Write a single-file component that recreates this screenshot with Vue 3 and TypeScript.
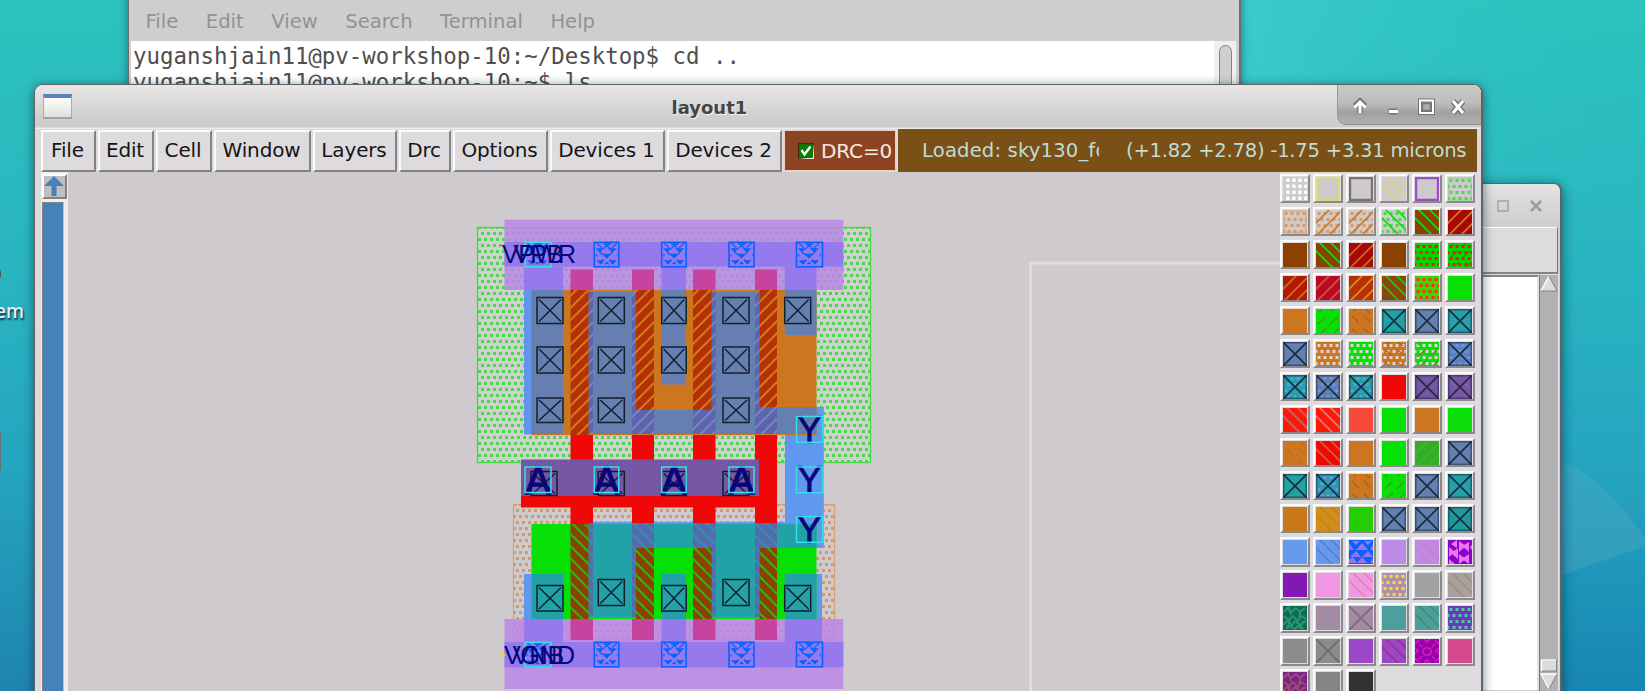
<script setup lang="ts">
type Layer = [kind: string, color: string]
interface Swatch { bg: string; layers: Layer[] }
type Box = [x: number, y: number, w: number, h: number]

const menus = [
  { label: 'File', w: 55 }, { label: 'Edit', w: 56 }, { label: 'Cell', w: 56 },
  { label: 'Window', w: 97 }, { label: 'Layers', w: 84 }, { label: 'Drc', w: 52 },
  { label: 'Options', w: 95 }, { label: 'Devices 1', w: 115 }, { label: 'Devices 2', w: 115 },
]
const termMenus = ['File', 'Edit', 'View', 'Search', 'Terminal', 'Help']

function dotPath(): string {
  let d = ''
  for (let r = 0; r < 4; r++) {
    for (let c = 0; c < 5; c++) {
      const x = c * 6 + (r % 2 ? -1.5 : 1.5)
      d += `M${x} ${r * 6 + 2}h3v3h-3z`
    }
  }
  return d
}
function gridPath(): string {
  let d = ''
  for (let r = 0; r < 4; r++) for (let c = 0; c < 4; c++) d += `M${c * 6 + 3.2} ${r * 6 + 1.5}h3.4v3.4h-3.4z`
  return d
}
const fills: Record<string, string> = {
  dots: dotPath(),
  grid: gridPath(),
  tri: 'M3 1h8l-4 4zM15 1h8l-4 4zM0 3l5 7H0zM13 3l6 7H7zM24 4v6h-3zM7 11l5 6H1zM19 11l5 6H13zM1 19l3-2 4 6H0v-4zM13 17l5 6H8zM24 18v5h-3z',
  vtri: 'M9 0v8L3 4zM1 7l6 5-6 5zM10 8v11l-7-6zM1 19l6 5H1zM11 1l7 5-7 6zM21 2v10l-7-6zM11 14l7 5-7 5zM21 14v10l-7-5zM22 7l2-2v5z',
}
const strokes: Record<string, string> = {
  slash: 'M-2 15L15 -2M-2 28L28 -2M10 28L28 10',
  back: 'M-4 4L20 28M-2 -6L30 26M9 -6L30 15',
  dslash: 'M2 15l8-7M14 15l8-7M3 3l4-4M16 2l3-3M4 25l7-6M17 25l6-6',
  dback: 'M3 7l7 7M15 7l7 7M3 -1l4 3M15 -1l6 5M3 20l6 5M15 20l6 5',
  x: 'M0 0L24 24M24 0L0 24',
  frame: 'M1 1H23V23H1z',
  rings: 'M10 9h4l2 2v3l-2 2h-4l-2-2v-3zM0 5l4-4M0 19l4 4M20 1l4 4M20 23l4-4M0 9l3 3-3 3M24 9l-3 3 3 3M9 0l3 3 3-3M9 24l3-3 3 3M4 5l3 3M17 17l3 3M20 5l-3 3M7 17l-3 3',
  weave: 'M0 6l5-4 3 4 5-4 4 4 5-4M1 10l5 4 4-4 5 5 3-5 5 3M0 19l4-4 5 4 3-4 5 4 6-4M3 23l4-3 5 3 3-3 6 3M5 0l3 9M18 4l-2 8M7 14l-3 8M20 15l-3 8',
}
const G = '#07e007', O = '#cc7720', T = '#22a1a6', S = '#647fb0', B = '#8b4100', P = '#7557a3', N = '#cecacd', R = '#f00808'
const K = '#17303f'
const sw = (bg: string, ...layers: Layer[]): Swatch => ({ bg, layers })

const swatches: Swatch[] = [
  sw(N, ['grid', '#ffffff']), sw(N, ['frame', '#e0dc70']), sw(N, ['frame', '#777477']), sw(N, ['back', '#ddd57c']), sw(N, ['frame', '#9b4fc4']), sw(N, ['frame', '#a5d3a5'], ['dots', '#4bd84b']),
  sw(N, ['frame', '#d9b899'], ['dots', '#d59b68']), sw(N, ['dots', '#d59b68'], ['slash', '#cf7a26']), sw(N, ['dots', '#d59b68'], ['slash', '#cf7a26']), sw(N, ['dots', '#4bd84b'], ['back', '#10dd10']), sw(B, ['back', '#10dd10']), sw('#a80808', ['slash', '#cf7a26']),
  sw(B), sw(B, ['back', '#10dd10']), sw('#a80808', ['slash', '#c86c20']), sw(B), sw('#00d800', ['dots', '#ff1010']), sw('#00d800', ['dots', '#ff1010'], ['dslash', '#5c6c10']),
  sw('#b01808', ['slash', '#d07010']), sw('#b80a28', ['slash', '#d85038']), sw('#b83008', ['slash', '#d89010']), sw('#8b4610', ['back', '#20cc00']), sw('#38d800', ['dots', '#ff3010']), sw(G),
  sw(O), sw(G, ['dslash', '#509010']), sw(O, ['dback', '#a55f1b']), sw(T, ['x', K]), sw(S, ['x', K]), sw(T, ['dslash', '#4a90c4'], ['x', K]),
  sw(S, ['x', K]), sw(O, ['dots', '#dad6da']), sw(G, ['dots', '#dad6da']), sw(O, ['dots', '#dad6da'], ['dback', '#a86020']), sw(G, ['dots', '#dad6da'], ['dslash', '#9a6848']), sw(S, ['dots', '#5c98f4'], ['x', K]),
  sw(T, ['dots', '#5c98f4'], ['x', K]), sw(S, ['dots', '#5c98f4'], ['x', K]), sw(T, ['dots', '#5c98f4'], ['x', K]), sw(R), sw(P, ['x', '#352548']), sw(P, ['dback', '#8666b0'], ['x', '#352548']),
  sw('#ff1808', ['back', '#b86c6c']), sw('#ff1808', ['back', '#d08080']), sw('#f84838'), sw(G), sw(O), sw(G, ['dslash', '#30c818']),
  sw(O, ['dback', '#b96d24']), sw(R, ['back', '#d06030']), sw(O), sw(G), sw('#3ba82a', ['slash', '#20c818']), sw(S, ['x', K]),
  sw(T, ['x', K]), sw(T, ['dots', '#6c92f4'], ['x', K]), sw(O, ['dback', '#a55f1b']), sw(G, ['dslash', '#509010']), sw(S, ['x', K]), sw(T, ['dslash', '#4a90b8'], ['x', K]),
  sw('#c87818'), sw('#d48e18', ['back', '#c08420']), sw('#20d000', ['slash', '#38c010']), sw(S, ['x', K]), sw('#6080b0', ['x', K]), sw('#2098a0', ['x', K]),
  sw('#6699ee'), sw('#6699ee', ['back', '#5784c4']), sw('#0a60ff', ['tri', '#9378ed']), sw('#bd8ae8'), sw('#bd8ae8', ['back', '#cf7fbc']), sw('#8c00c8', ['vtri', '#e878f0']),
  sw('#9010c4', ['rings', '#65308c']), sw('#f098e4'), sw('#f098e4', ['back', '#ee7db8']), sw('#b090a8', ['dots', '#f2e020']), sw('#a3a1a3'), sw('#a3a1a3', ['back', '#ad8c70']),
  sw('#0a7048', ['weave', '#309484']), sw('#a58aa4'), sw('#a58aa4', ['x', '#7b6c7b']), sw('#4c9f9c'), sw('#4c9f9c', ['back', '#468c74']), sw('#6a3ab8', ['dots', '#50c8a8']),
  sw('#8a8d8a'), sw('#8a8d8a', ['x', '#6a6d6a']), sw('#9b48c8'), sw('#9b48c8', ['back', '#9c3090']), sw('#9800b8', ['rings', '#d4209a']), sw('#d64a90'),
  sw('#802090', ['weave', '#965468']), sw('#858385'), sw('#303230'),
]

const strokeWidth = (k: string): number => (k === 'frame' ? 2.4 : k === 'dslash' || k === 'dback' ? 1.1 : 1.7)
const darkEdge = (s: Swatch): boolean => s.layers.some(l => l[0] === 'x' && (l[1] === K || l[1] === '#352548'))

/* layout geometry, in page units */
const polys: Box[] = [[570.5, 0, 22.5, 0], [632, 0, 22, 0], [693, 0, 22.5, 0], [755, 0, 22, 0]]
const gates: Array<[x: number, w: number, top: number, bottom: number, nTop: number]> = [
  [570.5, 18, 290, 435, 524], [636, 18, 290, 410, 548], [693, 18.7, 290, 410, 548], [759.5, 17.5, 290, 407, 548],
]
const contactCols = [537, 598.3, 661.2, 723, 784.7]
const contacts: Box[] = [
  ...contactCols.map((x): Box => [x, 297.5, 26, 26]),
  ...contactCols.slice(0, 4).map((x): Box => [x, 347, 26, 26]),
  ...[537, 598.3, 723].map((x): Box => [x, 398, 26, 24.5]),
  ...[537, 661.2, 784.7].map((x): Box => [x, 585.5, 26, 25.5]),
  ...[598.3, 723].map((x): Box => [x, 579.5, 26, 26]),
  ...[531, 598.3, 661.2, 723].map((x): Box => [x, 471.5, 26, 24]),
].map(([x, y, w, h]): Box => (x === 661.2 ? [x + 0.5, y, 24.5, h] : [x, y, w, h]))
const viaXs: Array<[number, number]> = [[525, 26], [594.3, 24.5], [661.7, 24.5], [729, 25], [796.5, 26]]
const aXs: Array<[number, number]> = viaXs.slice(0, 4)
const yYs = [416.5, 467, 516.5]
</script>

<template>
  <div class="desktop">
    <svg class="sky" viewBox="0 0 1645 691" preserveAspectRatio="none">
      <defs>
        <linearGradient id="sky" x1="0" y1="0" x2="0" y2="1">
          <stop offset="0" stop-color="#2cc3bd" /><stop offset=".35" stop-color="#2ab6c0" />
          <stop offset=".68" stop-color="#25a5c0" /><stop offset="1" stop-color="#1f84ae" />
        </linearGradient>
        <linearGradient id="glow" x1="0" y1="0" x2="1" y2="0">
          <stop offset="0" stop-color="#42d0d4" stop-opacity=".65" /><stop offset="1" stop-color="#2abfc0" stop-opacity="0" />
        </linearGradient>
        <linearGradient id="deep" x1="0" y1="0" x2="0" y2="1">
          <stop offset="0" stop-color="#1f9abc" /><stop offset="1" stop-color="#1886b0" />
        </linearGradient>
      </defs>
      <rect width="1645" height="691" fill="url(#sky)" />
      <rect x="1230" width="415" height="190" fill="url(#glow)" />
      <path d="M1550 455Q1610 480 1645 540V550L1550 580z" fill="#4caac4" opacity=".4" />
      <path d="M1550 579L1645 546V691H1550z" fill="url(#deep)" />
    </svg>
    <div class="icon-edge upper"></div>
    <div class="icon-edge lower"></div>
    <div class="icon-label">em</div>

    <section class="terminal">
      <nav class="term-menu"><span v-for="m in termMenus" :key="m">{{ m }}</span></nav>
      <div class="term-body">
        <pre>yuganshjain11@pv-workshop-10:~/Desktop$ cd ..
yuganshjain11@pv-workshop-10:~$ ls</pre>
        <div class="term-scroll"><i></i></div>
      </div>
    </section>

    <section class="console">
      <header>
        <svg width="12" height="12" viewBox="0 0 12 12"><rect x="1" y="1" width="10" height="10" fill="none" stroke="#a5a5a5" stroke-width="1.6" /></svg>
        <svg width="14" height="14" viewBox="0 0 14 14"><path d="M2 2l10 10M12 2L2 12" stroke="#9c9c9c" stroke-width="2.5" /></svg>
      </header>
      <div class="console-bar"></div>
      <div class="console-body">
        <div class="paper"></div>
        <svg class="console-scroll" width="18" height="416" viewBox="0 0 19 416" preserveAspectRatio="none">
          <rect width="19" height="416" fill="#b3b0b3" />
          <path d="M9.500 1L18 16H1z" fill="#dedbde" /><path d="M9.500 1L1 16" stroke="#fff" stroke-width="1.500" /><path d="M9.500 1L18 16H1" stroke="#858285" fill="none" />
          <rect x="1.500" y="385" width="16" height="11" fill="#dedbde" stroke="#858285" /><path d="M1.500 396V385H17" stroke="#fff" fill="none" stroke-width="1.500" />
          <path d="M1 399H18L9.500 414z" fill="#dedbde" /><path d="M9.500 414L1 399H18" stroke="#fff" fill="none" stroke-width="1.300" /><path d="M18 399L9.500 414" stroke="#858285" />
        </svg>
      </div>
    </section>

    <section class="magic">
      <header class="titlebar">
        <span class="app-icon"></span>
        <h1>layout1</h1>
        <div class="controls">
          <svg viewBox="0 0 145 40" width="145" height="40">
            <g stroke="#777" stroke-width="5" stroke-linejoin="round" fill="none">
              <path d="M22 28V17M17 21l5-5 5 5" stroke-width="6" /><path d="M50.500 26.500h9" stroke-width="6" /><path d="M115 16l10 12M125 16l-10 12" stroke-width="6" />
            </g>
            <g stroke="#fff" stroke-width="3" fill="none">
              <path d="M22 28V17" /><path d="M16.500 22.500L22 17l5.500 5.500" /><path d="M51 26.500h9" /><path d="M115 16l10 12M125 16l-10 12" />
            </g>
            <rect x="82" y="15.500" width="13" height="12.500" fill="#999" stroke="#747474" stroke-width="4" />
            <rect x="82" y="15.500" width="13" height="12.500" fill="none" stroke="#fff" stroke-width="2" />
            <rect x="84.500" y="18.500" width="8" height="7" fill="#aaa" stroke="#777" stroke-width="1.300" />
          </svg>
        </div>
      </header>

      <div class="toolbar">
        <button v-for="m in menus" :key="m.label" :style="{ width: m.w + 'px' }">{{ m.label }}</button>
        <div class="drc">
          <svg width="16" height="16" viewBox="0 0 16 16"><rect width="16" height="16" fill="#f3e8e0" /><path d="M0 16V0H16L14.500 14.500z" fill="#4b2a12" /><rect x="1.200" y="1.200" width="13.600" height="13.600" fill="#048004" /><path d="M3.500 7l3 4.500 6-8" fill="none" stroke="#fff" stroke-width="2.400" /></svg>
          <span>DRC=0</span>
        </div>
        <div class="status"><span class="loaded">Loaded: sky130_fd</span><span class="coords">(+1.82 +2.78) -1.75 +3.31 microns</span></div>
      </div>

      <div class="body">
        <div class="vscroll">
          <div class="arrow"><svg width="20" height="21" viewBox="0 0 20 21"><path d="M10 0L20 10H12.500V20H7.500V10H0z" fill="#4483b8" /></svg></div>
          <div class="track"></div>
        </div>

        <svg class="canvas" viewBox="68 172 1212 519" width="1212" height="519">
          <defs>
            <pattern id="dg" width="6" height="12" patternUnits="userSpaceOnUse" x="478" y="227"><path d="M3 5h3v3h-3zM0 11h3v1h-3zM0 0h3v2h-3z" fill="#4fd44f" /></pattern>
            <pattern id="dor" width="6" height="12" patternUnits="userSpaceOnUse" x="513" y="504"><path d="M3 5h3v3h-3zM0 11h3v1h-3zM0 0h3v2h-3z" fill="#d69a64" /></pattern>
            <pattern id="hs" width="12.200" height="12.200" patternUnits="userSpaceOnUse"><path d="M-2 14.200L14.200 -2M-2 2L2 -2M10.200 14.200L14.200 10.200" stroke="#d48e16" stroke-width="1.700" /></pattern>
            <pattern id="hsl" width="12.200" height="12.200" patternUnits="userSpaceOnUse"><path d="M-2 14.200L14.200 -2M-2 2L2 -2M10.200 14.200L14.200 10.200" stroke="#7890c0" stroke-width="1.600" /></pattern>
            <pattern id="hb" width="12.200" height="12.200" patternUnits="userSpaceOnUse"><path d="M-2 -2L14.200 14.200M-2 10.200L2 14.200M10.200 -2L14.200 2" stroke="#1ad00a" stroke-width="1.700" /></pattern>
            <pattern id="hbl" width="12.200" height="12.200" patternUnits="userSpaceOnUse"><path d="M-2 -2L14.200 14.200M-2 10.200L2 14.200M10.200 -2L14.200 2" stroke="#2798b0" stroke-width="1.600" /></pattern>
            <g id="via" fill="#0a60ff">
              <path d="M8 1h9l-2 2h-5zM1 6h8l-4 4.500zM13 6h9l-4.500 4.500zM7 11.500h9.500l-4.500 5zM1 12h2l-2 3zM24 12h-2l2 3zM1.500 18h8.500l-4 4.500zM13.500 18h8.500l-4 4.500z" />
              <path d="M2 1l5 4.500M22 1l-5 4.500M12 3l4 4M12 3L8 7M5 10l3 2.500M18 10l-3 2.500M9 17l-2 2M15 17l2 2M10 22l2-2 2 2" fill="none" stroke="#0a60ff" stroke-width="1.200" />
            </g>
          </defs>

          <path d="M1282 263H1030.500V691" fill="none" stroke="#dfdcdf" stroke-width="3" />

          <rect x="477.500" y="227.500" width="393" height="235" fill="#cfd0cf" />
          <rect x="477.500" y="227.500" width="393" height="235" fill="url(#dg)" stroke="#3fdc3f" stroke-width="1.300" />
          <rect x="513.500" y="504.500" width="321" height="135.500" fill="url(#dor)" stroke="#d8a070" stroke-width="1.300" />

          <g fill="#5f98ee">
            <rect x="524" y="290" width="8" height="144.500" /><rect x="785" y="407" width="38.800" height="140.800" />
            <rect x="588.500" y="522" width="235.300" height="3" /><rect x="524" y="574" width="8" height="45" /><rect x="816" y="574" width="6" height="45" />
          </g>
          <rect x="531.500" y="289.500" width="285" height="145.700" fill="#cc7720" />
          <rect x="531.500" y="524" width="285" height="95" fill="#07e007" />

          <g fill="#f00808">
            <rect v-for="(p, i) in polys" :key="i" :x="p[0]" y="435" :width="p[2]" height="89" />
            <rect x="521" y="495" width="256" height="12.500" />
          </g>
          <rect x="521" y="459.500" width="238" height="36.500" fill="#7557a3" />

          <g fill="#647fb0">
            <rect x="531.500" y="290" width="31.500" height="144" /><rect x="588.500" y="292" width="47.500" height="142" />
            <rect x="661.500" y="290" width="24.500" height="94.500" /><rect x="711.700" y="292" width="47.800" height="142" />
            <rect x="784.800" y="290" width="31.700" height="45" /><rect x="636" y="410" width="125" height="24" /><rect x="759" y="407" width="57.500" height="27" />
          </g>
          <g fill="#22a1a6">
            <rect x="531.500" y="574" width="31.500" height="45" /><rect x="588.500" y="524" width="47.500" height="93" />
            <rect x="661.500" y="574" width="24.500" height="45" /><rect x="711.700" y="524" width="47.800" height="93" />
            <rect x="784.800" y="574" width="31.700" height="45" /><rect x="636" y="524" width="180.500" height="24" />
          </g>

          <g v-for="f in ['#5d63ad', 'url(#hsl)']" :key="f" :fill="f">
            <rect x="588.500" y="292" width="4.500" height="142" /><rect x="632" y="292" width="4" height="142" />
            <rect x="711.700" y="292" width="3.800" height="142" /><rect x="755" y="292" width="4.500" height="142" />
            <rect x="636" y="410" width="18" height="24" /><rect x="693" y="410" width="18.700" height="24" /><rect x="759.500" y="407" width="17.500" height="27" />
          </g>
          <g v-for="f in ['#566bac', 'url(#hbl)']" :key="f" :fill="f">
            <rect x="588.500" y="523" width="4.500" height="94" /><rect x="632" y="523" width="4" height="94" />
            <rect x="711.700" y="523" width="3.800" height="94" /><rect x="755" y="523" width="4.500" height="94" />
            <rect x="636" y="523" width="18" height="25" /><rect x="693" y="523" width="18.700" height="25" /><rect x="759.500" y="523" width="17.500" height="25" />
          </g>
          <g v-for="(g, i) in gates" :key="i">
            <rect :x="g[0]" :y="g[2]" :width="g[1]" :height="g[3] - g[2]" fill="#b53008" />
            <rect :x="g[0]" :y="g[2]" :width="g[1]" :height="g[3] - g[2]" fill="url(#hs)" />
            <rect :x="g[0]" :y="g[4]" :width="g[1]" :height="619 - g[4]" fill="#8b4106" />
            <rect :x="g[0]" :y="g[4]" :width="g[1]" :height="619 - g[4]" fill="url(#hb)" />
          </g>

          <g fill="#bb85e9" fill-opacity=".84">
            <rect x="504.500" y="219.700" width="338.800" height="70.300" /><rect x="504.500" y="619" width="338.800" height="70" />
          </g>
          <g fill="#9378ed" fill-opacity=".95">
            <rect x="504.500" y="242" width="338.800" height="24.700" /><rect x="504.500" y="642" width="338.800" height="25.300" />
            <rect x="524" y="266.700" width="39" height="23.300" /><rect x="661.500" y="266.700" width="24.500" height="23.300" /><rect x="784.800" y="266.700" width="31.700" height="23.300" />
            <rect x="524" y="619" width="39" height="23" /><rect x="661.500" y="619" width="24.500" height="23" /><rect x="784.800" y="619" width="37.200" height="23" />
          </g>
          <g fill="#c6449f">
            <template v-for="(p, i) in polys" :key="i"><rect :x="p[0]" y="269.500" :width="p[2]" height="20.500" /><rect :x="p[0]" y="619" :width="p[2]" height="21" /></template>
          </g>

          <g fill="none" stroke="#131f2c" stroke-width="1.500">
            <template v-for="(c, i) in contacts" :key="i">
              <rect :x="c[0]" :y="c[1]" :width="c[2]" :height="c[3]" />
              <path :d="`M${c[0] + 2} ${c[1] + 2}l${c[2] - 4} ${c[3] - 4}M${c[0] + c[2] - 2} ${c[1] + 2}l${4 - c[2]} ${c[3] - 4}`" />
            </template>
          </g>

          <template v-for="y in [242.3, 642.3]" :key="y">
            <g v-for="(v, i) in viaXs" :key="i">
              <use href="#via" :x="v[0] + .5" :y="y" />
              <rect :x="v[0]" :y="y" :width="v[1]" height="24.500" fill="none" :stroke="i ? '#0a60ff' : '#35e0ec'" stroke-width="1.600" />
            </g>
          </template>

          <g class="net">
            <text x="539" y="263.300" textLength="74">VPWR</text><text x="538.500" y="263.300">VPB</text>
            <text x="539.500" y="663.500" textLength="71">VGND</text><text x="538.500" y="663.500">VNB</text>
          </g>
          <path d="M500.500 655h5M503.500 652.500v5" stroke="#e8e020" stroke-width="1.500" />
          <g class="pin">
            <text v-for="(a, i) in aXs" :key="i" class="heavy" :x="a[0] + a[1] / 2" y="494">A</text>
            <text v-for="y in yYs" :key="y" x="809.500" :y="y + 26">Y</text>
          </g>
          <g fill="none" stroke="#35e0ec" stroke-width="1.500">
            <rect v-for="(a, i) in aXs" :key="i" :x="a[0]" y="467" :width="a[1]" height="25.500" />
            <rect v-for="y in yYs" :key="y" x="796.500" :y="y" width="26.300" height="25.800" />
          </g>
        </svg>

        <div class="palette">
          <div v-for="(s, i) in swatches" :key="i" class="cell">
            <svg viewBox="0 0 24 24">
              <rect width="24" height="24" :fill="s.bg" />
              <template v-for="(l, j) in s.layers" :key="j">
                <path v-if="fills[l[0]]" :d="fills[l[0]]" :fill="l[1]" />
                <path v-else :d="strokes[l[0]]" fill="none" :stroke="l[1]" :stroke-width="strokeWidth(l[0])" />
              </template>
              <rect v-if="darkEdge(s)" x=".75" y=".75" width="22.500" height="22.500" fill="none" stroke="#152535" stroke-opacity=".5" stroke-width="1.500" />
            </svg>
          </div>
        </div>
      </div>
    </section>
  </div>
</template>

<style>
html, body { margin: 0; overflow: hidden; }
</style>

<style scoped>
.desktop { position: relative; width: 1645px; height: 691px; overflow: hidden; font-family: "DejaVu Sans", sans-serif; }
.sky { position: absolute; inset: 0; width: 100%; height: 100%; }
.icon-label { position: absolute; left: -5px; top: 300px; font: 500 19px/22px "Noto Sans", sans-serif; color: #e8f4f5; text-shadow: 1px 2px 2px #124; }
.icon-edge { position: absolute; left: -8px; width: 9px; border-radius: 0 6px 6px 0; background: #555; }
.icon-edge.upper { top: 267px; height: 14px; }
.icon-edge.lower { top: 428px; height: 46px; background: #6a7078; }

.terminal { position: absolute; left: 128px; top: -10px; width: 1113px; height: 120px; box-sizing: border-box; border: 1px solid #6d6d6d; border-width: 0 2px 0 1px; background: #cecece; box-shadow: 0 1px 8px rgba(0, 50, 60, .55); }
.term-menu { height: 50.500px; padding: 12px 0 0 16.500px; box-sizing: border-box; display: flex; align-items: center; gap: 27.500px; font-size: 19.600px; color: #929292; }
.term-body { display: flex; height: 80px; margin: 0 3px 0 2px; background: #fff; }
.term-body pre { flex: 1; margin: 0; padding: 2px 0 0 2px; font: 22.420px/26.500px "DejaVu Sans Mono", monospace; color: #4e4e4e; }
.term-scroll { width: 22px; background: #efeff0; box-sizing: border-box; padding: 4px 4px 0 5px; }
.term-scroll i { display: block; height: 90px; border: 1.500px solid #858585; border-radius: 7px; background: #cfcfcf; box-sizing: border-box; }

.console { position: absolute; left: 1440px; top: 183px; width: 122px; height: 530px; box-sizing: border-box; border: 1px solid #626262; border-right-width: 2px; border-radius: 0 8px 0 0; background: #cfcfcf; box-shadow: 0 2px 12px rgba(0, 45, 60, .65); }
.console header { height: 43px; padding: 1px 17px 0 0; box-sizing: border-box; display: flex; justify-content: flex-end; align-items: center; gap: 20px; background: linear-gradient(#e6e4e5, #d8d8d8 45%, #cfcfcf); border-radius: 0 7px 0 0; }
.console-bar { height: 47px; margin-right: 2px; border: 1px solid #fff; border-right: 1.500px solid #777; border-bottom: 2px solid #858285; box-sizing: border-box; background: #dedbde; }
.console-body { display: flex; height: 415px; margin-right: 1px; padding-top: 1px; background: #e3e1e3; }
.paper { flex: 1; background: #fff; border-top: 2px solid #858285; border-right: 2px solid #e4e3e4; box-sizing: border-box; }
.console-scroll { margin-right: 1px; border-left: 1px solid #777; }

.magic { position: absolute; left: 34px; top: 84px; width: 1449px; height: 640px; box-sizing: border-box; border: 1px solid #626262; border-right-width: 2px; border-radius: 9px 9px 0 0; background: #dddadd; box-shadow: 0 2px 11px rgba(0, 45, 60, .6); }
.titlebar { position: relative; height: 44px; box-sizing: border-box; display: flex; justify-content: space-between; background: linear-gradient(#e9e5e8 0, #e2e0e1 9px, #dedede 12px, #cecece 34px, #cdcdcd 42px, #ececec 43px); border-radius: 8px 8px 0 0; }
.app-icon { width: 29px; height: 25px; margin: 9px 0 0 8px; box-sizing: border-box; border: 1px solid #aaa; border-top: 4px solid #5a82bb; border-bottom: 2px solid #a3a3a3; background: linear-gradient(#fff, #dce0d8); }
h1 { position: absolute; left: 636.500px; top: 12px; margin: 0; font-size: 18px; line-height: 22px; color: #454545; text-shadow: 1px 1px 0 #f4f4f4; }
.controls { width: 144px; height: 40px; border-left: 1px solid #999; border-bottom: 1px solid #8c8c8c; box-sizing: border-box; border-radius: 0 8px 0 9px; background: linear-gradient(#c8c8c8, #bdbdbd 45%, #a0a0a0 72%, #b1b1b1); }
.toolbar { display: flex; height: 43px; margin: 0 4px 0 5px; background: #dedbde; align-items: center; gap: 2px; }
.toolbar button { height: 42px; flex: none; box-sizing: border-box; margin: 1px 0 0; padding: 0 2px 2px 0; font: 20px "DejaVu Sans", sans-serif; letter-spacing: -.15px; color: #151515; background: #dedbde; border: 2px solid; border-color: #fafafa #858285 #858285 #fafafa; white-space: nowrap; }
.toolbar button:first-child { margin-left: 1px; }
.drc { flex: none; width: 112px; height: 41px; box-sizing: border-box; display: flex; align-items: center; gap: 7px; padding-left: 13px; background: #8b4322; border: 1px solid #e4cfc6; color: #f6ebe5; font-size: 20px; }
.drc span { letter-spacing: -.1px; }
.status { flex: 1; height: 43px; padding-bottom: 1px; box-sizing: border-box; display: flex; align-items: center; background: #7a5017; color: #bfdcd6; font-size: 19.600px; letter-spacing: -.25px; white-space: nowrap; }
.loaded { width: 177px; margin-left: 24px; overflow: hidden; letter-spacing: .16px; }
.coords { margin-left: 27px; }
.body { display: flex; height: 519px; padding-left: 6px; }
.vscroll { flex: none; width: 27px; background: #efeeef; box-sizing: border-box; padding: 2px 0 0 1px; }
.arrow { width: 25px; height: 25px; box-sizing: border-box; border: 2px solid; border-color: #fff #858285 #858285 #fff; background: #bfbfbf; }
.arrow svg { display: block; }
.track { width: 22px; height: 500px; margin-top: 3px; box-sizing: border-box; background: #4483b8; border: 1.500px solid #858285; border-right: 1px solid #a9c7de; }
.canvas { flex: none; display: block; background: #cecacd; }
.net text { font: 25px "Liberation Sans", Arial, sans-serif; fill: #070778; text-anchor: middle; }
.pin text { font: 38px "Liberation Sans", Arial, sans-serif; fill: #06067a; stroke: #06067a; stroke-width: .6; text-anchor: middle; }
.pin .heavy { stroke-width: 1.300; }
.palette { flex: none; display: grid; grid-template-columns: repeat(6, 33.050px); grid-auto-rows: 33.050px; align-content: start; width: 199px; padding: 1.500px 0 0; box-sizing: border-box; background: #dedbde; }
.cell { width: 29.500px; height: 29.500px; box-sizing: border-box; padding: 1px 0 0 1px; border: 2px solid; border-color: #fbfafb #8c898c #8c898c #fbfafb; }
.cell svg { display: block; width: 24px; height: 24px; overflow: hidden; }
</style>
